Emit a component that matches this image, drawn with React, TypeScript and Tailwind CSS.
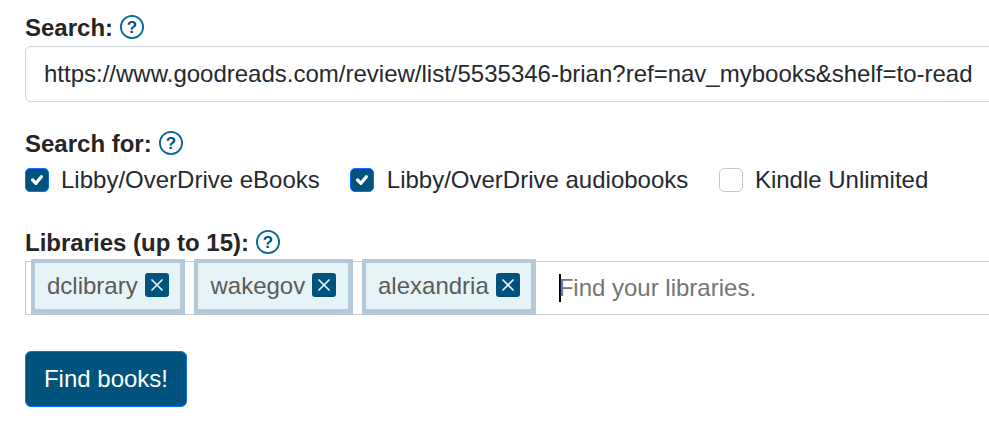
import React from "react";

const Help = () => (
  <svg viewBox="0 0 24 24" className="h-6 w-6 shrink-0">
    <circle cx="12" cy="12" r="11.1" fill="none" stroke="#01689b" strokeWidth="1.8" />
    <text x="12" y="18" textAnchor="middle" fontSize="17" fontWeight="700" fontFamily="'Liberation Sans', Arial, sans-serif" fill="#01527c">?</text>
  </svg>
);

const Label = ({ children }: { children: React.ReactNode }) => (
  <div className="flex h-7 items-center gap-[7px] text-[24px] font-bold leading-7 text-[#252525]">
    <span className="mt-[2px]">{children}</span>
    <Help />
  </div>
);

const Check = ({ label, checked, className }: { label: string; checked: boolean; className?: string }) => (
  <label className={`flex items-center ${className ?? ""}`}>
    {checked ? (
      <span className="flex h-6 w-6 items-center justify-center rounded-[5px] border border-[#0d6efd] bg-[#01527c]">
        <svg viewBox="0 0 20 20" className="h-[22px] w-[22px]" fill="none" stroke="#fff" strokeWidth="3" strokeLinecap="round" strokeLinejoin="round">
          <path d="M6 10l3 3 5-6" />
        </svg>
      </span>
    ) : (
      <span className="h-6 w-6 rounded-[5px] border border-[#c4c8cc] bg-white" />
    )}
    <span className="ml-3 text-[24px] leading-7 text-[#252a30]">{label}</span>
  </label>
);

const Tag = ({ name, className }: { name: string; className?: string }) => (
  <div className={`-mt-[3px] flex h-[56px] items-center gap-[7px] border-b-[6px] border-l-4 border-r-[5px] border-t-4 border-[#b5cad9] bg-[#e6f4f7] pb-[2px] pl-[12px] pr-[11.6px] ${className ?? ""}`}>
    <span className="mt-[2px] text-[24px] leading-7 text-[#5c5c5c]">{name}</span>
    <span className="flex h-6 w-6 items-center justify-center rounded-[3px] bg-[#01527c]">
      <svg viewBox="0 0 24 24" className="h-6 w-6" fill="none" stroke="#e6f4f7" strokeWidth="1.7">
        <path d="M6.5 6.5l11 11M17.5 6.5l-11 11" />
      </svg>
    </span>
  </div>
);

export default function App() {
  return (
    <div className="h-[431px] w-[989px] overflow-hidden bg-white pl-[25px] pt-[13px] font-['Liberation_Sans',Arial,sans-serif]">
      <div className="w-[1100px]">
        <Label>Search:</Label>
        <div className="mt-[5px] flex h-[56px] items-center rounded-[6px] border border-[#ced4da] pl-[18px] text-[24px] leading-7 text-[#252a30]">
          https://www.goodreads.com/review/list/5535346-brian?ref=nav_mybooks&amp;shelf=to-read
        </div>
        <div className="mt-[27px]">
          <Label>Search for:</Label>
        </div>
        <div className="mt-[9px] flex items-center">
          <Check label="Libby/OverDrive eBooks" checked />
          <Check label="Libby/OverDrive audiobooks" checked className="ml-[30px] [&>span:last-child]:ml-[13px]" />
          <Check label="Kindle Unlimited" checked={false} className="ml-[30.6px]" />
        </div>
        <div className="mt-[34px]">
          <Label>Libraries (up to 15):</Label>
        </div>
        <div className="mt-[5px] flex h-[54px] items-start border border-[#cccccc] pl-[5px]">
          <Tag name="dclibrary" />
          <Tag name="wakegov" className="ml-[9.2px]" />
          <Tag name="alexandria" className="ml-[9.2px]" />
          <div className="ml-[22.3px] flex h-[52px] items-center">
            <span className="-mr-[2px] h-7 w-[2px] bg-black" />
            <span className="text-[24px] leading-7 text-[#757575]">Find your libraries.</span>
          </div>
        </div>
        <button className="mt-[36px] flex h-[56px] w-[162px] items-center justify-center rounded-[6px] border border-[#0d6efd] bg-[#01527c] text-[24px] leading-7 text-white">
          Find books!
        </button>
      </div>
    </div>
  );
}
